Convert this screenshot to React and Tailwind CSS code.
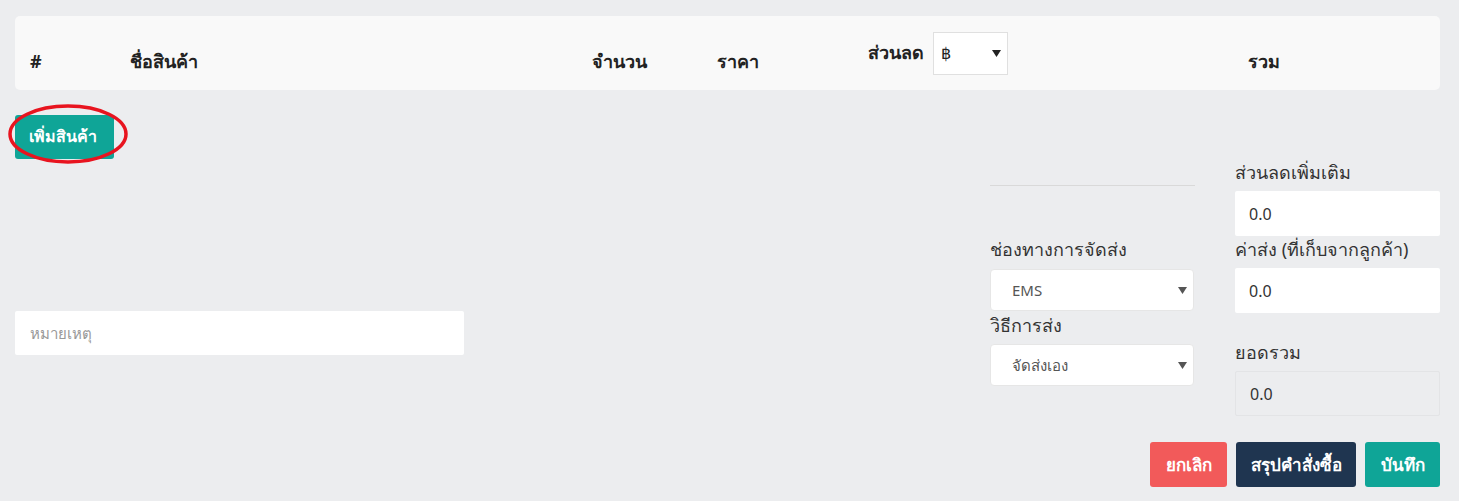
import React from "react";

const font = { fontFamily: '"Noto Sans", "Open Sans", sans-serif' };

function Caret() {
  return (
    <svg width="9" height="7" viewBox="0 0 9 7" className="shrink-0">
      <path d="M0 0 L9 0 L4.5 7 Z" fill="#222" />
    </svg>
  );
}

function SelectBox({ value }) {
  return (
    <div className="flex h-[42px] w-[204px] items-center justify-between rounded-[4px] border border-[#e6e6e6] bg-white pl-[21px] pr-[6px] text-[15px] text-[#555]">
      <span>{value}</span>
      <svg width="9" height="7" viewBox="0 0 9 7"><path d="M0 0 L9 0 L4.5 7 Z" fill="#555" /></svg>
    </div>
  );
}

function NumInput({ disabled }) {
  return (
    <div
      className={
        "flex h-[45px] w-[205px] items-center rounded-[2px] pl-[14px] text-[16px] text-[#333] " +
        (disabled ? "border border-[#e3e4e6] bg-[#ecedef]" : "bg-white")
      }
    >
      0.0
    </div>
  );
}

function Label({ children, className = "" }) {
  return <div className={"h-[24px] text-[18px] leading-[24px] text-[#333] " + className}>{children}</div>;
}

export default function App() {
  return (
    <div className="h-[501px] w-[1459px] bg-[#ecedef] pl-[15px] pr-[19px] pt-[16px] text-[#222]" style={font}>
      {/* header */}
      <div className="flex h-[74px] items-center rounded-[5px] bg-[#f9f9f9] text-[18px] font-bold">
        <div className="w-[115px] pl-[15px] pt-[16px]">#</div>
        <div className="w-[462px] pt-[16px]">ชื่อสินค้า</div>
        <div className="w-[125px] pt-[16px]">จำนวน</div>
        <div className="w-[151px] pt-[16px]">ราคา</div>
        <div className="flex w-[380px] items-center gap-[9px]">
          <span className="pb-[2px]">ส่วนลด</span>
          <div className="flex h-[43px] w-[75px] items-center justify-between border border-[#e0e0e0] bg-white pl-[7px] pr-[6px] text-[16px] font-normal">
            <span>฿</span>
            <Caret />
          </div>
        </div>
        <div className="pt-[16px]">รวม</div>
      </div>

      {/* add product button */}
      <div className="relative mt-[25px] h-[45px] w-[99px]">
        <div className="flex h-[44px] w-[99px] items-center rounded-[3px] bg-[#0fa597] pl-[14px] pb-[2px] text-[16px] font-bold text-white">
          เพิ่มสินค้า
        </div>
        <svg className="absolute left-[-8px] top-[-12px]" width="124" height="64" viewBox="0 0 124 64">
          <ellipse cx="61" cy="31" rx="58" ry="28" fill="none" stroke="#e8141f" strokeWidth="3.5" />
        </svg>
      </div>

      {/* lower area */}
      <div className="flex">
        <div className="flex w-[975px] flex-col">
          <div className="mt-[151px] flex h-[44px] w-[449px] items-center rounded-[2px] bg-white pl-[15px] text-[15px] text-[#999]">
            หมายเหตุ
          </div>
        </div>

        <div className="flex flex-col">
          <div className="w-[205px] pt-[25px]">
            <div className="h-px bg-[#d9d9d9]" />
          </div>
          <Label className="mt-[51px]">ช่องทางการจัดส่ง</Label>
          <div className="mt-[8px]">
            <SelectBox value="EMS" />
          </div>
          <Label className="mt-[2px]">วิธีการส่ง</Label>
          <div className="mt-[7px]">
            <SelectBox value="จัดส่งเอง" />
          </div>
        </div>

        <div className="ml-[40px] flex flex-col">
          <Label>ส่วนลดเพิ่มเติม</Label>
          <div className="mt-[7px]"><NumInput /></div>
          <Label className="mt-[1px]">ค่าส่ง (ที่เก็บจากลูกค้า)</Label>
          <div className="mt-[7px]"><NumInput /></div>
          <Label className="mt-[27px]">ยอดรวม</Label>
          <div className="mt-[7px]"><NumInput disabled /></div>
        </div>
      </div>

      {/* action buttons */}
      <div className="mt-[26px] flex justify-end gap-[9px]">
        <div className="flex h-[45px] w-[77px] items-center justify-center rounded-[3px] bg-[#f25a5a] text-[17px] font-bold text-white">ยกเลิก</div>
        <div className="flex h-[45px] w-[120px] items-center justify-center rounded-[3px] bg-[#1f3550] text-[17px] font-bold text-white">สรุปคำสั่งซื้อ</div>
        <div className="flex h-[45px] w-[75px] items-center justify-center rounded-[3px] bg-[#0fa597] text-[17px] font-bold text-white">บันทึก</div>
      </div>
    </div>
  );
}
